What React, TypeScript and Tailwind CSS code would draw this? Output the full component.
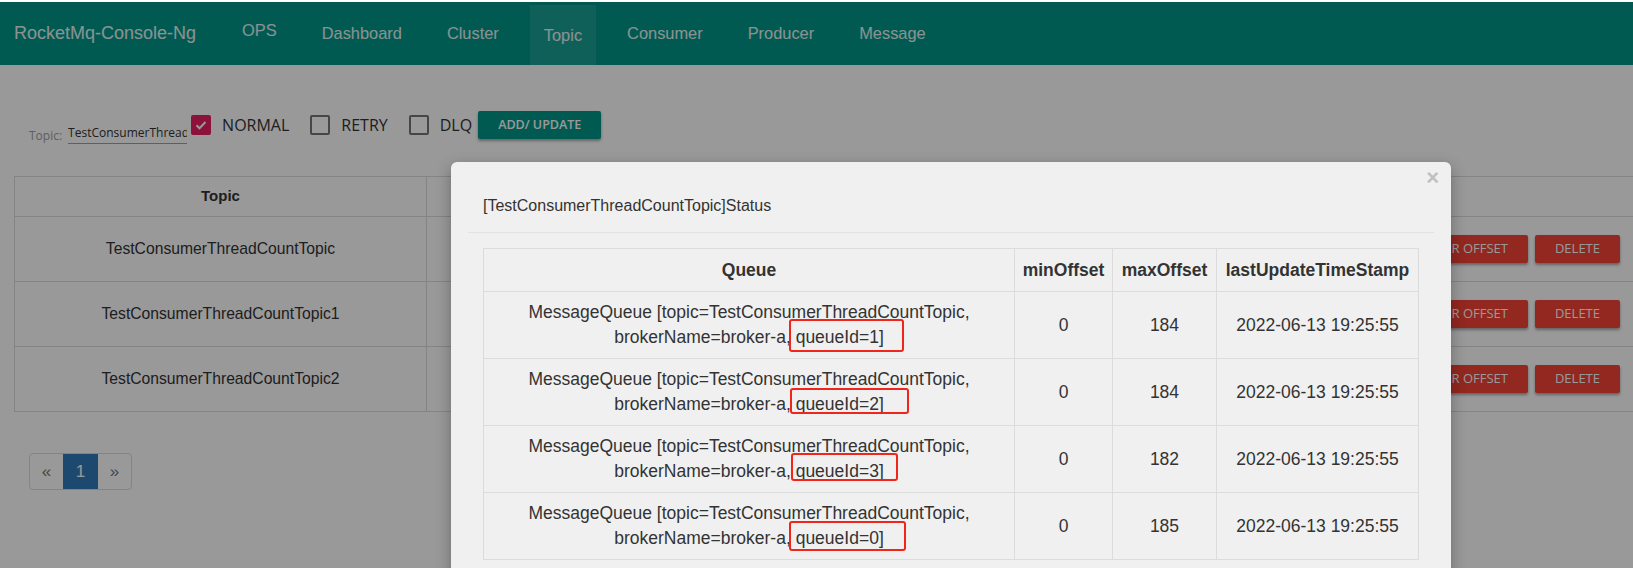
import clsx from 'clsx';

const navItems = ['OPS', 'Dashboard', 'Cluster', 'Topic', 'Consumer', 'Producer', 'Message'];

const topics = ['TestConsumerThreadCountTopic', 'TestConsumerThreadCountTopic1', 'TestConsumerThreadCountTopic2'];

const operations = ['STATUS', 'ROUTER', 'CONSUMER MANAGE', 'TOPIC CONFIG', 'SEND MESSAGE', 'RESET CONSUMER OFFSET', 'DELETE'];

// red boxes drawn around the queueId part of each row
const queues = [
  { id: 1, min: 0, max: 184, box: 'top-[-8px] bottom-[-5px] -left-[7px] -right-[20px]' },
  { id: 2, min: 0, max: 184, box: 'top-[-6px] bottom-[0px] -left-[6px] -right-[25px]' },
  { id: 3, min: 0, max: 182, box: 'top-[-8px] bottom-[0px] -left-[5px] -right-[14px]' },
  { id: 0, min: 0, max: 185, box: 'top-[-7px] bottom-[-3px] -left-[7px] -right-[22px]' },
];

function Check({ label, checked, className }: { label: string; checked?: boolean; className?: string }) {
  return (
    <label className={clsx('flex items-center h-[28px]', className)}>
      <span
        className={clsx(
          'w-[20px] h-[20px] rounded-[2px] flex items-center justify-center',
          checked ? 'bg-[#e91e63]' : 'border-2 border-[#757575]'
        )}
      >
        {checked && (
          <svg width="14" height="14" viewBox="0 0 14 14" fill="none">
            <path d="M2.5 7.2l3 3L11.5 4" stroke="#fff" strokeWidth="2" />
          </svg>
        )}
      </span>
      <span className="ml-[11px] text-[16px] text-[#333]">{label}</span>
    </label>
  );
}

export default function App() {
  return (
    <div className="w-[1633px] h-[568px] overflow-hidden bg-white flex flex-col font-['Liberation_Sans',Arial,sans-serif]">
      <div className="h-[2px] bg-white shrink-0" />
      <div className="relative flex-1 overflow-hidden">
        {/* Navbar */}
        <nav className="h-[63px] bg-[#009688] flex items-stretch pl-[14px] text-white/90">
          <div className="flex items-center text-[18px]">RocketMq-Console-Ng</div>
          <ul className="flex items-stretch ml-[32px] gap-[17px]">
            {navItems.map((item) => (
              <li
                key={item}
                className={clsx(
                  'flex items-center px-[14px] text-[16.4px]',
                  item === 'Topic' && 'bg-white/10 mt-[3px]',
                  item === 'OPS' && 'pb-[6px]'
                )}
              >
                {item}
              </li>
            ))}
          </ul>
        </nav>

        <main className="px-[14px]">
          {/* Form row */}
          <div className="mt-[46px] pl-[15px] h-[28px] flex items-start font-['Open_Sans',sans-serif]">
            <div className="mt-[13px] flex items-start">
              <span className="text-[12px] leading-[17px] mt-[3px] text-[#9e9e9e]">Topic:</span>
              <div className="ml-[6px] w-[119px] overflow-hidden whitespace-nowrap border-b border-[#9e9e9e] pb-[2px] text-[12px] leading-[17px] text-[#333]">
                TestConsumerThreadCountTopic
              </div>
            </div>
            <Check label="NORMAL" checked className="ml-[4px] mr-[21px]" />
            <Check label="RETRY" className="mr-[21px]" />
            <Check label="DLQ" className="mr-[6px]" />
            <button className="h-[28px] px-[20px] bg-[#009688] text-white text-[12.5px] font-semibold rounded-[2px] shadow-[0_2px_3px_rgba(0,0,0,0.35)]">
              ADD/ UPDATE
            </button>
          </div>

          {/* Topic table */}
          <table className="mt-[37px] w-[1626px] table-fixed border-collapse text-[#333]">
            <colgroup>
              <col className="w-[412px]" />
              <col />
            </colgroup>
            <thead>
              <tr className="h-[40px]">
                <th className="border border-[#ddd] text-[15px] font-bold">Topic</th>
                <th className="border border-[#ddd] text-[15px] font-bold">Operation</th>
              </tr>
            </thead>
            <tbody>
              {topics.map((t) => (
                <tr key={t} className="h-[65px]">
                  <td className="border border-[#ddd] text-center text-[15.7px]">{t}</td>
                  <td className="border border-[#ddd] pr-[19px]">
                    <div className="flex justify-end gap-[7px] font-['Open_Sans',sans-serif]">
                      {operations.map((op) => (
                        <button
                          key={op}
                          className="h-[28px] px-[20px] bg-[#f44336] text-white text-[13px] rounded-[2px] shadow-[0_2px_3px_rgba(0,0,0,0.35)] whitespace-nowrap"
                        >
                          {op}
                        </button>
                      ))}
                    </div>
                  </td>
                </tr>
              ))}
            </tbody>
          </table>

          {/* Pagination */}
          <div className="mt-[41px] ml-[15px] flex w-fit h-[37px] border border-[#ddd] rounded-[4px] overflow-hidden text-[17px]">
            <span className="w-[33px] flex items-center justify-center text-[#777]">«</span>
            <span className="w-[35px] flex items-center justify-center bg-[#337ab7] text-white">1</span>
            <span className="w-[33px] flex items-center justify-center text-[#777]">»</span>
          </div>
        </main>

        {/* Backdrop */}
        <div className="absolute inset-0 bg-black/40" />

        {/* Status modal */}
        <div className="absolute left-[451px] top-[160px] w-[1000px] rounded-[6px] bg-[#f0f0f0] px-[17px] pb-[40px] shadow-[0_5px_15px_rgba(0,0,0,0.3)]">
          <button className="absolute right-[12px] top-[4px] text-[22px] leading-[24px] font-bold text-[#c0c0c0]">×</button>
          <div className="px-[15px] pt-[32px] pb-[14px] border-b border-[#e2e2e2]">
            <h4 className="text-[16px] leading-[24px] text-[#333]">[TestConsumerThreadCountTopic]Status</h4>
          </div>
          <div className="px-[15px] pt-[15px]">
            <table className="w-full table-fixed border-collapse text-[#333] text-[17.5px] leading-[25px]">
              <colgroup>
                <col className="w-[531px]" />
                <col className="w-[98px]" />
                <col className="w-[104px]" />
                <col />
              </colgroup>
              <thead>
                <tr className="h-[43px]">
                  <th className="border border-[#dcdcdc] px-[8px] font-bold">Queue</th>
                  <th className="border border-[#dcdcdc] px-[4px] font-bold">minOffset</th>
                  <th className="border border-[#dcdcdc] px-[4px] font-bold">maxOffset</th>
                  <th className="border border-[#dcdcdc] px-[4px] font-bold whitespace-nowrap">lastUpdateTimeStamp</th>
                </tr>
              </thead>
              <tbody>
                {queues.map((q) => (
                  <tr key={q.id} className="h-[67px]">
                    <td className="border border-[#dcdcdc] px-[8px] text-center">
                      MessageQueue [topic=TestConsumerThreadCountTopic,
                      <br />
                      brokerName=broker-a,{' '}
                      <span className="relative">
                        queueId={q.id}]
                        <span className={clsx('absolute border-[2.5px] border-[#f0261c] rounded-[3px]', q.box)} />
                      </span>
                    </td>
                    <td className="border border-[#dcdcdc] text-center">{q.min}</td>
                    <td className="border border-[#dcdcdc] text-center">{q.max}</td>
                    <td className="border border-[#dcdcdc] text-center whitespace-nowrap">2022-06-13 19:25:55</td>
                  </tr>
                ))}
              </tbody>
            </table>
          </div>
        </div>
      </div>
    </div>
  );
}
